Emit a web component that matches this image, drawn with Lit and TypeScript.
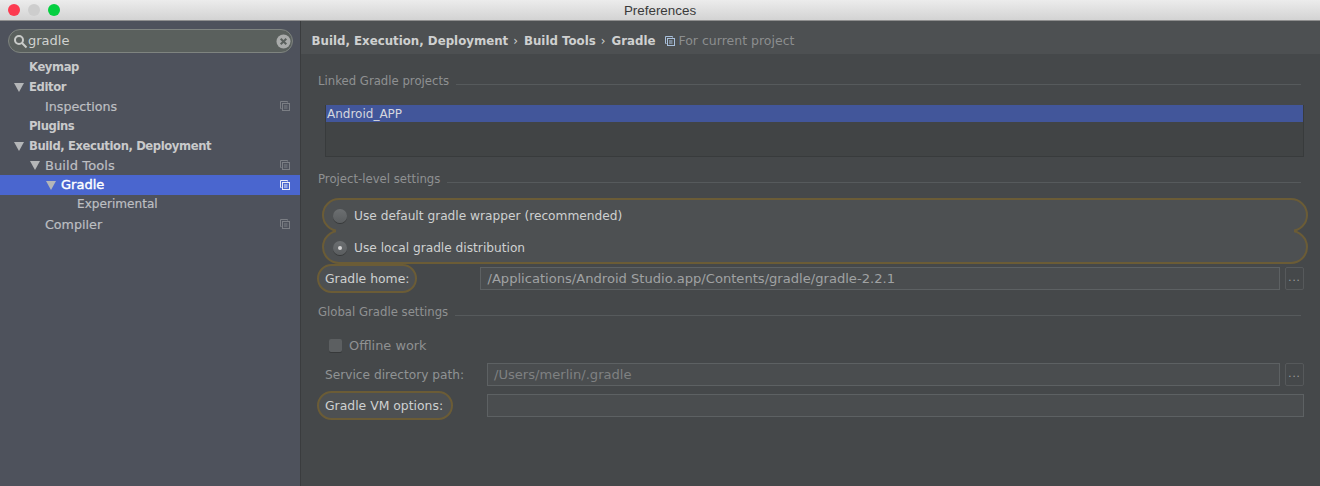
import { LitElement, html, css, svg } from "lit";
import { customElement } from "lit/decorators.js";

const copyIcon = (c: string) => html`<svg class="copy" width="10" height="10" viewBox="0 0 10 10" fill="none" stroke=${c} stroke-width="1"><path d="M7.5 1.5V.5H.5v7h1"/><rect x="2.5" y="2.5" width="7" height="7"/><path d="M4 5h3.5M4 7h3.5"/></svg>`;
const tri = svg`<path d="M0 0h9L4.5 8z"/>`;

const rows = [
  { t: "Keymap", l: 0, k: "b" },
  { t: "Editor", l: 0, k: "b", a: 1 },
  { t: "Inspections", l: 1, c: 1 },
  { t: "Plugins", l: 0, k: "b" },
  { t: "Build, Execution, Deployment", l: 0, k: "b", a: 1 },
  { t: "Build Tools", l: 1, a: 1, c: 1, k: "t" },
  { t: "Gradle", l: 2, a: 1, c: 1, k: "s" },
  { t: "Experimental", l: 3, k: "e" },
  { t: "Compiler", l: 1, c: 1 },
] as any[];

@customElement("app-root")
export class AppRoot extends LitElement {
  static styles = css`
    :host { display: block; width: 1320px; height: 486px; overflow: hidden; font-family: "DejaVu Sans", sans-serif; font-size: 12px; color: #c4c6c6; }
    .title { height: 20px; background: linear-gradient(#ececec, #d3d3d3); border-bottom: 1px solid #8f8f8f; display: flex; align-items: center; justify-content: center; position: relative; color: #3a3a3a; font-family: "Liberation Sans", sans-serif; font-size: 13.4px; }
    .lights { position: absolute; left: 8px; top: 4px; display: flex; gap: 8px; }
    .lights i { width: 12px; height: 12px; border-radius: 50%; display: block; }
    .win { display: flex; height: 465px; }
    aside { width: 300px; background: #4e525c; border-right: 1px solid #3a3c3e; padding-top: 8px; flex: none; }
    .search { margin: 0 7px 0 8px; height: 22px; border: 1px solid #7f8480; border-radius: 12px; background: #5a605d; display: flex; align-items: center; padding: 0 1px 0 4px; color: #d0d2d0; font-size: 13px; }
    .search span { flex: 1; padding-bottom: 2px; }
    .tree { margin-top: 4.2px; }
    .row { height: 19.625px; display: flex; align-items: center; position: relative; color: #bdbfc2; font-size: 12.7px; -webkit-text-stroke: 0.2px; }
    .row.e { font-size: 12.1px; }
    .row.t { font-size: 13px; letter-spacing: 0.1px; }
    .row.b { font-weight: 700; font-size: 11.6px; letter-spacing: -0.4px; color: #c9cacb; -webkit-text-stroke: 0; }
    .row.s { background: #4a66cf; color: #fff; font-size: 13px; -webkit-text-stroke: 0.4px; }
    .row .arrow { position: absolute; top: 6px; fill: #b4b6b8; }
    .row .copy { position: absolute; right: 10px; top: 5px; }
    main { flex: 1; background: #45484a; min-width: 0; }
    .head { height: 33px; box-sizing: border-box; padding: 6px 0 0 10.5px; background: #4d5052; display: flex; align-items: center; font-weight: 700; font-size: 11.8px; color: #cfd0d0; white-space: nowrap; }
    .head .sep { margin: 0 6px 0 5px; font-weight: 400; }
    .head .proj { margin-left: 10px; margin-right: 3px; display: flex; }
    .head .cur { font-weight: 400; font-size: 12.5px; color: #8c8e8f; }
    .body { padding: 18px 16px 0 17px; }
    .sec { display: flex; align-items: center; gap: 7px; color: #8f9192; height: 16px; box-sizing: border-box; padding: 1px 3px 0 0; font-size: 11.7px; }
    .sec hr { flex: 1; border: 0; border-top: 1px solid #565a5c; margin: 7px 0 0; }
    .list { margin: 17px 0 0 7px; height: 52px; background: #414445; border: 1px solid #383b3c; border-top: 0; box-sizing: border-box; }
    .list div { height: 17px; background: #42569a; color: #d5d7de; line-height: 18px; padding-left: 1px; }
    .s2 { margin-top: 13px; }
    .pills { margin: 12px -4px 0 4px; }
    .pill { height: 34px; box-sizing: border-box; border: 2px solid #6b5c36; border-radius: 17px; background: #4d5052; display: flex; align-items: center; padding: 1px 0 0 9px; gap: 7px; color: #cfd1d1; font-size: 12.2px; position: relative; }
    .pill + .pill { margin-top: -2px; }
    .pill + .pill::after { content: ""; position: absolute; left: 12px; right: 12px; top: -3px; height: 4px; background: #4d5052; }
    .radio { width: 14px; height: 14px; border-radius: 50%; background: linear-gradient(#6c6f71, #5a5d5f); box-shadow: 0 1px 0 #37393a; flex: none; display: flex; align-items: center; justify-content: center; }
    .radio.on::after { content: ""; width: 4px; height: 4px; border-radius: 50%; background: #d5d5d5; }
    .fr { display: flex; align-items: center; height: 23px; }
    .lab { border: 2px solid #6b5c36; border-radius: 15px; background: #4d5052; box-sizing: border-box; height: 29px; display: flex; align-items: center; padding: 0 6px; margin-left: -1px; color: #cfd1d1; flex: none; font-size: 12.4px; }
    .plain { padding-left: 7px; color: #909394; flex: none; width: 169px; box-sizing: border-box; font-size: 12.2px; }
    .field { flex: 1; height: 23px; box-sizing: border-box; border: 1px solid #5d6163; background: #4a4d4f; color: #7f8182; line-height: 21px; padding-left: 6px; white-space: nowrap; overflow: hidden; font-size: 13.1px; }
    .dots { width: 19px; height: 23px; box-sizing: border-box; margin-left: 5px; border: 1px solid #56595b; border-radius: 2px; color: #a0a2a3; text-align: center; line-height: 20px; font-size: 10px; letter-spacing: 1px; flex: none; }
    .f1 { margin-top: 3px; }
    .f1 .field { margin-left: 63px; color: #a0a2a3; }
    .s3 { margin-top: 13px; }
    .off { display: flex; align-items: center; gap: 7px; margin: 17px 0 0 11px; height: 18px; color: #8f9192; font-size: 12.9px; }
    .cb { width: 13px; height: 13px; border-radius: 2px; background: #5c5f61; box-shadow: 0 1px 0 #37393a; }
    .f2 { margin-top: 9px; }
    .f3 { margin-top: 8px; }
    .f3 .lab { padding-right: 8px; }
    .f3 .field { margin-left: 34px; }
  `;

  render() {
    return html`
      <div class="title">
        <div class="lights"><i style="background:#fc3b50"></i><i style="background:#cdcdcd"></i><i style="background:#04cf40"></i></div>
        Preferences
      </div>
      <div class="win">
        <aside>
          <div class="search">
            <svg width="15" height="15" viewBox="0 0 15 15" fill="none" stroke="#c9cbc9" stroke-width="2"><circle cx="6" cy="6" r="4"/><path d="M9 9l4.5 4.5"/></svg>
            <span>gradle</span>
            <svg width="15" height="15" viewBox="0 0 15 15"><circle cx="7.5" cy="7.5" r="7" fill="#a9abaa"/><path d="M4.7 4.7l5.6 5.6M10.3 4.7l-5.6 5.6" stroke="#5a605d" stroke-width="2"/></svg>
          </div>
          <div class="tree">
            ${rows.map((r) => html`
              <div class="row ${r.k || ""}" style="padding-left:${29 + r.l * 16}px">
                ${r.a ? html`<svg class="arrow" style="left:${14 + r.l * 16}px" width="10" height="9" viewBox="0 0 9 8">${tri}</svg>` : ""}
                ${r.t}
                ${r.c ? copyIcon(r.k === "s" ? "#e8ebf7" : "#7b7e84") : ""}
              </div>`)}
          </div>
        </aside>
        <main>
          <div class="head">Build, Execution, Deployment<span class="sep">›</span>Build Tools<span class="sep">›</span>Gradle
            <span class="proj">${copyIcon("#a9c0dc")}</span><span class="cur">For current project</span></div>
          <div class="body">
            <div class="sec">Linked Gradle projects<hr /></div>
            <div class="list"><div>Android_APP</div></div>
            <div class="sec s2">Project-level settings<hr /></div>
            <div class="pills">
              <div class="pill"><span class="radio"></span>Use default gradle wrapper (recommended)</div>
              <div class="pill"><span class="radio on"></span>Use local gradle distribution</div>
            </div>
            <div class="fr f1"><span class="lab">Gradle home:</span><span class="field">/Applications/Android Studio.app/Contents/gradle/gradle-2.2.1</span><span class="dots">...</span></div>
            <div class="sec s3">Global Gradle settings<hr /></div>
            <div class="off"><span class="cb"></span>Offline work</div>
            <div class="fr f2"><span class="plain">Service directory path:</span><span class="field">/Users/merlin/.gradle</span><span class="dots">...</span></div>
            <div class="fr f3"><span class="lab">Gradle VM options:</span><span class="field"></span></div>
          </div>
        </main>
      </div>`;
  }
}
